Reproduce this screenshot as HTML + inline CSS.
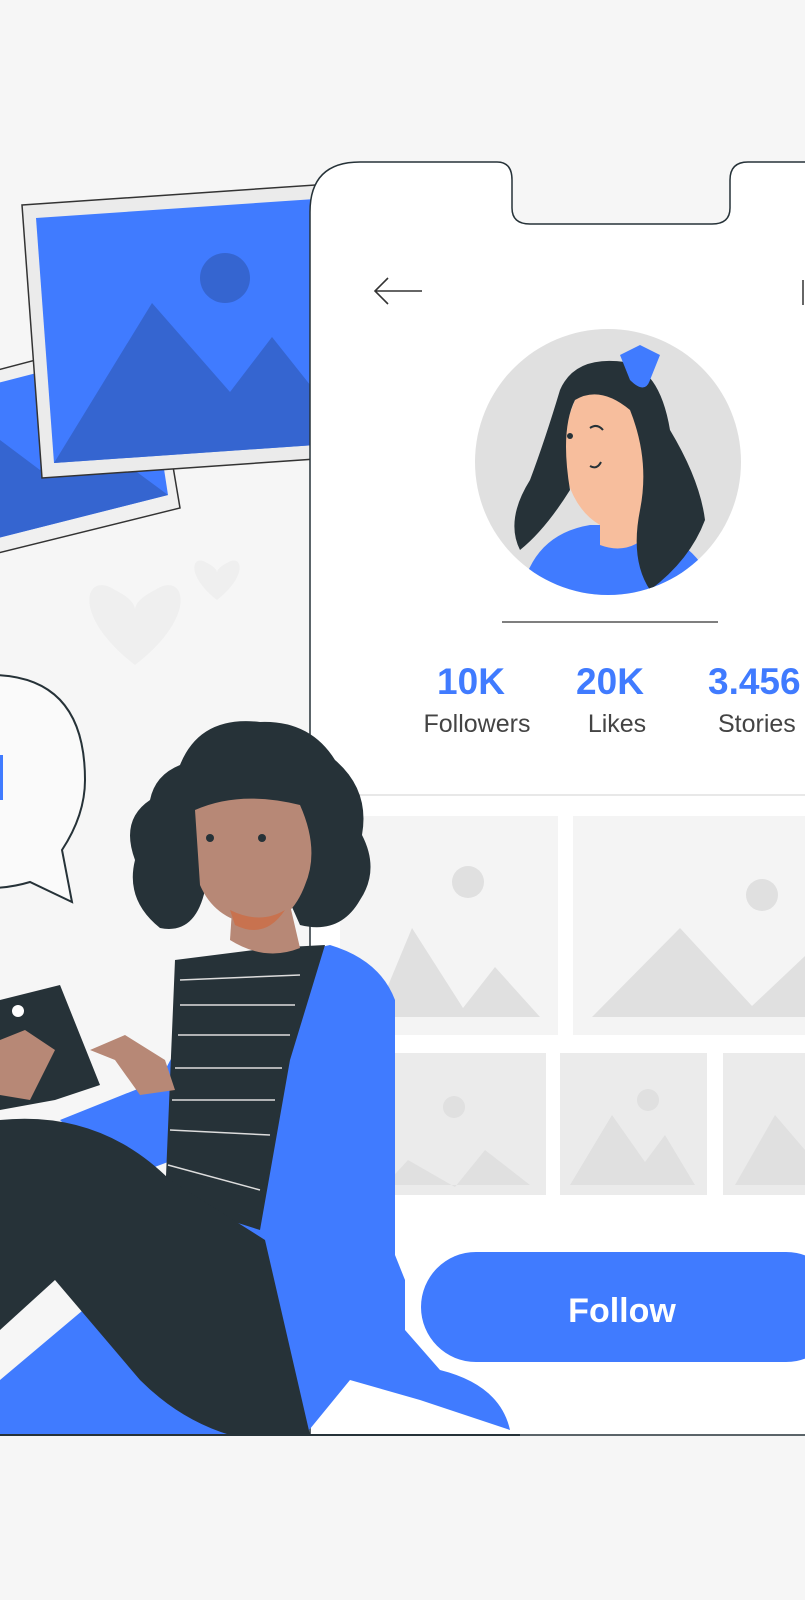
<!DOCTYPE html>
<html><head><meta charset="utf-8"><style>
html,body{margin:0;padding:0;background:#f6f6f6;}
svg{display:block}
text{font-family:"Liberation Sans",sans-serif}
</style></head><body>
<svg width="805" height="1600" viewBox="0 0 805 1600" xmlns="http://www.w3.org/2000/svg">
<rect width="805" height="1600" fill="#f6f6f6"/>
<!-- back photo -->
<polygon points="-10,372 150,330 180,508 -10,555" fill="#f0f0f0" stroke="#333" stroke-width="1.5"/>
<polygon points="-10,385 145,345 168,495 -10,540" fill="#407bff"/>
<polygon points="-10,540 0,440 40,470 80,430 168,495" fill="#3565d0"/>
<!-- front photo -->
<polygon points="22,205 330,184 330,458 42,478" fill="#ebebeb" stroke="#333" stroke-width="1.5"/>
<polygon points="36,218 330,198 330,444 54,463" fill="#407bff"/>
<polygon points="54,463 152,303 230,392 272,337 330,410 330,444" fill="#3565d0"/>
<circle cx="225" cy="278" r="25" fill="#3565d0"/>
<!-- hearts -->
<path d="M135,665 C70,615 85,570 115,590 Q135,600 135,610 Q135,600 155,590 C185,570 200,615 135,665Z" fill="#efefef"/>
<path d="M217,600 C185,575 192,553 207,563 Q217,568 217,573 Q217,568 227,563 C242,553 249,575 217,600Z" fill="#efefef"/>
<!-- phone -->
<path d="M310,1435 L310,212 Q310,162 360,162 L497,162 Q512,162 512,180 L512,208 Q512,224 530,224 L712,224 Q730,224 730,208 L730,180 Q730,162 748,162 L820,162 L820,1435 Z" fill="#fff" stroke="#263238" stroke-width="1.5"/>
<line x1="310" y1="795" x2="805" y2="795" stroke="#e8e8e8" stroke-width="2"/>
<!-- arrow -->
<path d="M422,291 L375,291 M388,278 L375,291 L388,304" fill="none" stroke="#333" stroke-width="1.6"/>
<line x1="803" y1="280" x2="803" y2="305" stroke="#333" stroke-width="1.5"/>
<!-- avatar -->
<circle cx="608" cy="462" r="133" fill="#e0e0e0"/>
<clipPath id="av"><circle cx="608" cy="462" r="133"/></clipPath>
<g clip-path="url(#av)">
<path d="M520,600 Q530,535 590,525 L640,525 Q700,540 720,600Z" fill="#407bff"/>
<path d="M575,400 Q610,350 655,400 L665,510 Q640,560 600,545 L600,525 Q565,505 560,440Z" fill="#f7be9d"/>
<path d="M560,390 Q575,355 625,362 Q660,370 670,430 Q700,480 705,520 Q690,560 650,590 Q630,560 640,510 Q650,460 630,410 Q600,385 575,400 Q560,430 570,490 Q545,530 520,550 Q505,520 530,480 Q545,440 560,390Z" fill="#263238"/>
<path d="M620,355 L640,345 L660,355 L650,380 Q645,395 630,380Z" fill="#407bff"/>
<circle cx="570" cy="436" r="3" fill="#263238"/>
<path d="M590,428 Q597,423 603,430" stroke="#263238" stroke-width="2" fill="none"/>
<path d="M590,466 Q597,470 601,462" stroke="#263238" stroke-width="2" fill="none"/>
</g>
<line x1="502" y1="622" x2="718" y2="622" stroke="#555" stroke-width="1.5"/>
<!-- stats -->
<g font-weight="bold" fill="#407bff" font-size="37" text-anchor="middle">
<text x="471" y="694">10K</text><text x="610" y="694">20K</text><text x="708" y="694" text-anchor="start">3.456</text>
</g>
<g fill="#444" font-size="25" text-anchor="middle">
<text x="477" y="732">Followers</text><text x="617" y="732">Likes</text><text x="718" y="732" text-anchor="start">Stories</text>
</g>
<!-- tiles -->
<g fill="#f4f4f4">
<rect x="340" y="816" width="218" height="219"/><rect x="573" y="816" width="240" height="219"/>
<rect x="380" y="1053" width="166" height="142" fill="#ebebeb"/><rect x="560" y="1053" width="147" height="142" fill="#ebebeb"/><rect x="723" y="1053" width="90" height="142" fill="#ebebeb"/>
</g>
<g fill="#e0e0e0">
<polygon points="375,1017 412,928 463,1008 495,967 540,1017"/><circle cx="468" cy="882" r="16"/>
<polygon points="592,1017 680,928 752,1006 805,956 805,1017"/><circle cx="762" cy="895" r="16"/>
<polygon points="385,1185 408,1160 455,1187 485,1150 530,1185"/><circle cx="454" cy="1107" r="11"/>
<polygon points="570,1185 612,1115 645,1162 665,1135 695,1185"/><circle cx="648" cy="1100" r="11"/>
<polygon points="735,1185 775,1115 805,1150 805,1185"/>
</g>
<!-- follow -->
<rect x="421" y="1252" width="420" height="110" rx="55" fill="#407bff"/>
<text x="622" y="1322" font-size="34" font-weight="bold" fill="#fff" text-anchor="middle">Follow</text>
<!-- speech bubble -->
<path d="M-10,675 Q85,675 85,780 Q85,815 62,850 L72,902 L30,882 Q10,888 -10,888Z" fill="#fafafa" stroke="#263238" stroke-width="2"/>
<rect x="-5" y="755" width="8" height="45" fill="#407bff"/>
<!-- person -->
<path d="M0,1435 L0,1380 L95,1300 L210,1310 L310,1435Z" fill="#407bff"/>
<path d="M230,1435 L305,1435 L350,1380 L420,1400 L510,1430 Q500,1385 440,1370 L405,1330 L405,1280 L395,1255 L395,1000 Q380,960 330,945 L260,960 Q210,980 160,1080 L60,1120 L120,1180 L200,1150Z" fill="#407bff"/>
<path d="M175,960 L270,948 L325,945 L290,1060 L260,1230 L165,1200Z" fill="#263238"/>
<g stroke="#ddd" stroke-width="1.5"><line x1="180" y1="980" x2="300" y2="975"/><line x1="180" y1="1005" x2="295" y2="1005"/><line x1="178" y1="1035" x2="290" y2="1035"/><line x1="175" y1="1068" x2="282" y2="1068"/><line x1="172" y1="1100" x2="275" y2="1100"/><line x1="170" y1="1130" x2="270" y2="1135"/><line x1="168" y1="1165" x2="260" y2="1190"/></g>
<path d="M230,940 L232,910 L290,905 L300,948 Q265,962 230,940Z" fill="#b78876"/>
<path d="M180,765 Q200,715 260,722 Q310,720 335,760 Q370,790 362,835 Q380,870 360,900 Q340,935 300,925 L280,880 L300,820 L200,815 L205,890 Q195,935 160,928 Q125,900 135,860 Q120,820 150,800 Q155,775 180,765Z" fill="#263238"/>
<path d="M195,810 Q240,790 300,805 Q320,850 305,885 Q290,925 255,925 Q215,920 200,885Z" fill="#b78876"/>
<path d="M230,910 Q260,925 285,910 Q265,940 235,925Z" fill="#c8724f"/>
<circle cx="210" cy="838" r="4" fill="#263238"/><circle cx="262" cy="838" r="4" fill="#263238"/>
<path d="M0,1120 Q100,1110 170,1180 L265,1240 L310,1435 L230,1435 Q180,1420 140,1380 L55,1280 L0,1330Z" fill="#263238"/>
<path d="M0,1000 L60,985 L100,1085 L55,1100 L0,1110Z" fill="#263238"/>
<circle cx="18" cy="1011" r="6" fill="#fff"/>
<path d="M0,1040 L25,1030 L55,1050 L30,1100 L0,1095Z" fill="#b78876"/>
<path d="M90,1050 L125,1035 L165,1060 L175,1090 L140,1095 L115,1060Z" fill="#b78876"/>
<line x1="0" y1="1435" x2="520" y2="1435" stroke="#263238" stroke-width="2"/>
</svg>
</body></html>
